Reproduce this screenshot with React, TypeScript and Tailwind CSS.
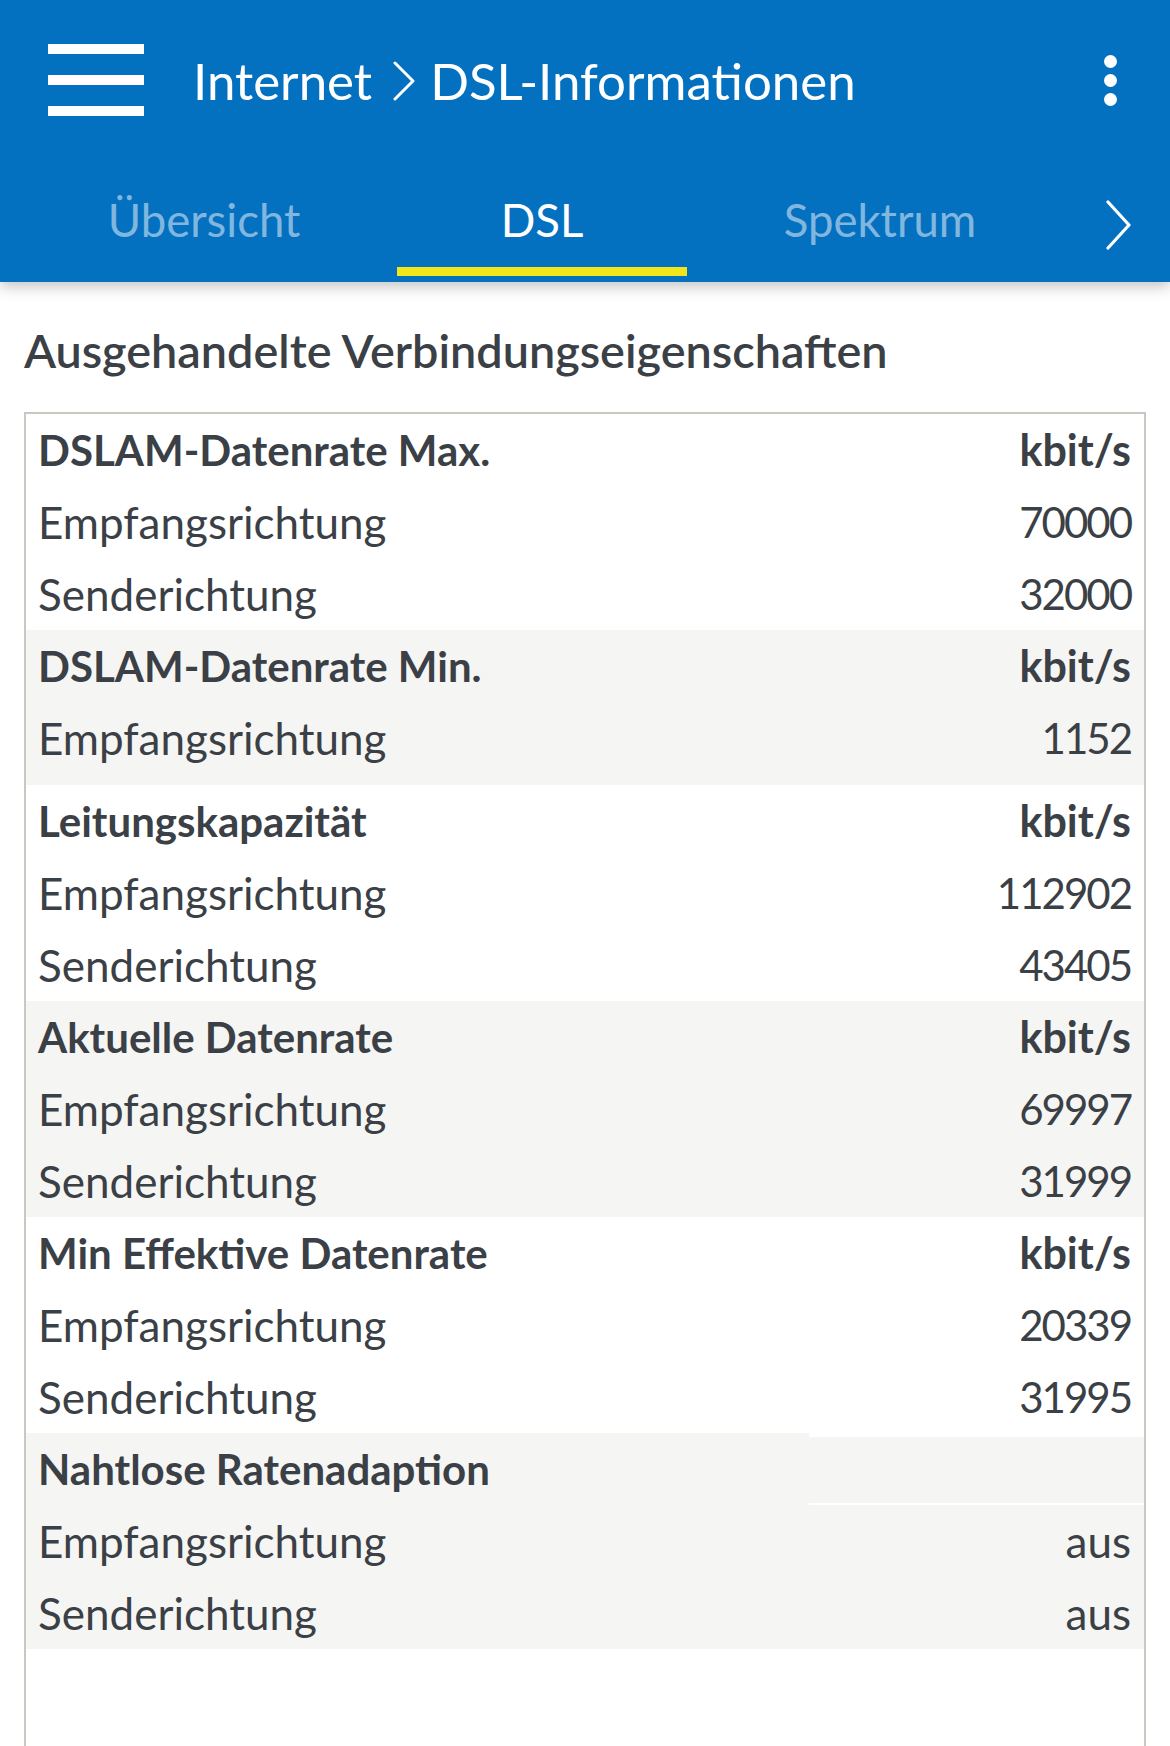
import React from "react";

type Group = {
  title: string;
  unit: string;
  gray: boolean;
  items: [string, string][];
  extra?: string;
  special?: boolean;
};

const groups: Group[] = [
  { title: "DSLAM-Datenrate Max.", unit: "kbit/s", gray: false, items: [["Empfangsrichtung", "70000"], ["Senderichtung", "32000"]] },
  { title: "DSLAM-Datenrate Min.", unit: "kbit/s", gray: true, items: [["Empfangsrichtung", "1152"]], extra: "pb-[11px]" },
  { title: "Leitungskapazität", unit: "kbit/s", gray: false, items: [["Empfangsrichtung", "112902"], ["Senderichtung", "43405"]] },
  { title: "Aktuelle Datenrate", unit: "kbit/s", gray: true, items: [["Empfangsrichtung", "69997"], ["Senderichtung", "31999"]] },
  { title: "Min Effektive Datenrate", unit: "kbit/s", gray: false, items: [["Empfangsrichtung", "20339"], ["Senderichtung", "31995"]] },
  { title: "Nahtlose Ratenadaption", unit: "", gray: true, special: true, items: [["Empfangsrichtung", "aus"], ["Senderichtung", "aus"]] },
];

const font = { fontFamily: "Lato, 'Open Sans', sans-serif" };

export default function App() {
  return (
    <div className="w-[1170px] h-[1746px] overflow-hidden bg-white flex flex-col text-[#3b3f46]" style={font}>
      {/* Header */}
      <div className="bg-[#0470c0] h-[282px] flex flex-col shrink-0 relative z-10 shadow-[0_4px_14px_rgba(0,0,0,0.25)]">
        <div className="h-[160px] flex items-center pl-[48px] pr-[53px]">
          <div className="w-[96px] flex flex-col gap-[21px]">
            <div className="h-[10px] bg-white" />
            <div className="h-[10px] bg-white" />
            <div className="h-[10px] bg-white" />
          </div>
          <div className="ml-[49px] flex items-center text-white text-[51px] leading-none">
            <span>Internet</span>
            <svg width="24" height="40" viewBox="0 0 24 40" className="ml-[20px] mr-[14px] mt-[2px]" fill="none">
              <path d="M3 2 L21 20 L3 38" stroke="white" strokeWidth="3" strokeLinecap="round" strokeLinejoin="round" />
            </svg>
            <span>DSL-Informationen</span>
          </div>
          <div className="ml-auto flex flex-col gap-[6px]">
            <div className="w-[13px] h-[13px] rounded-full bg-white" />
            <div className="w-[13px] h-[13px] rounded-full bg-white" />
            <div className="w-[13px] h-[13px] rounded-full bg-white" />
          </div>
        </div>
        <div className="h-[122px] flex pl-[35px]">
          <div className="w-[338px] flex flex-col">
            <div className="h-[107px] pt-[14px] flex items-center justify-center text-[45.5px] text-white/50">Übersicht</div>
          </div>
          <div className="w-[338px] flex flex-col">
            <div className="h-[107px] pt-[14px] flex items-center justify-center text-[45.5px] text-white">DSL</div>
            <div className="mx-[24px] h-[9px] bg-[#f2e61a]" />
          </div>
          <div className="w-[338px] flex flex-col">
            <div className="h-[107px] pt-[14px] flex items-center justify-center text-[45.5px] text-white/50">Spektrum</div>
          </div>
          <div className="flex-1 flex pt-[40px] pl-[56px]">
            <svg width="28" height="50" viewBox="0 0 28 50" fill="none">
              <path d="M3 2 L24 25 L3 48" stroke="white" strokeWidth="3.2" strokeLinecap="round" strokeLinejoin="round" />
            </svg>
          </div>
        </div>
      </div>

      {/* Content */}
      <div className="flex-1 flex flex-col min-h-0">
        <h1 className="mt-[38px] mb-[32px] px-[24px] text-[46.8px] leading-[60px] font-semibold whitespace-nowrap">
          Ausgehandelte Verbindungseigenschaften
        </h1>
        <div className="mx-[24px] flex-1 flex flex-col border-2 border-b-0 border-[#c9c9c1]">
          {groups.map((g) => (
            <div key={g.title} className={`${g.gray ? "bg-[#f5f5f3]" : "bg-white"} ${g.extra ?? ""}`}>
              {g.special ? (
                <div className="h-[72px] flex">
                  <div className="flex-1 flex items-center pl-[12px] text-[42px] font-bold whitespace-nowrap">{g.title}</div>
                  <div className="w-[335px] self-stretch border-t-[4px] border-b-[2px] border-white" />
                </div>
              ) : (
                <div className="h-[72px] flex items-center justify-between pl-[12px] pr-[13px] font-bold">
                  <span className="whitespace-nowrap text-[42px]">{g.title}</span>
                  <span className="text-[43px]">{g.unit}</span>
                </div>
              )}
              {g.items.map(([l, v]) => (
                <div key={l} className="h-[72px] flex items-center justify-between pl-[12px] pr-[13px]">
                  <span className="text-[44px]">{l}</span>
                  {/^\d+$/.test(v) ? (
                    <span className="text-[42px] tracking-[-2px]">{v}</span>
                  ) : (
                    <span className="text-[44px]">{v}</span>
                  )}
                </div>
              ))}
            </div>
          ))}
          <div className="flex-1 bg-white" />
        </div>
      </div>
    </div>
  );
}
